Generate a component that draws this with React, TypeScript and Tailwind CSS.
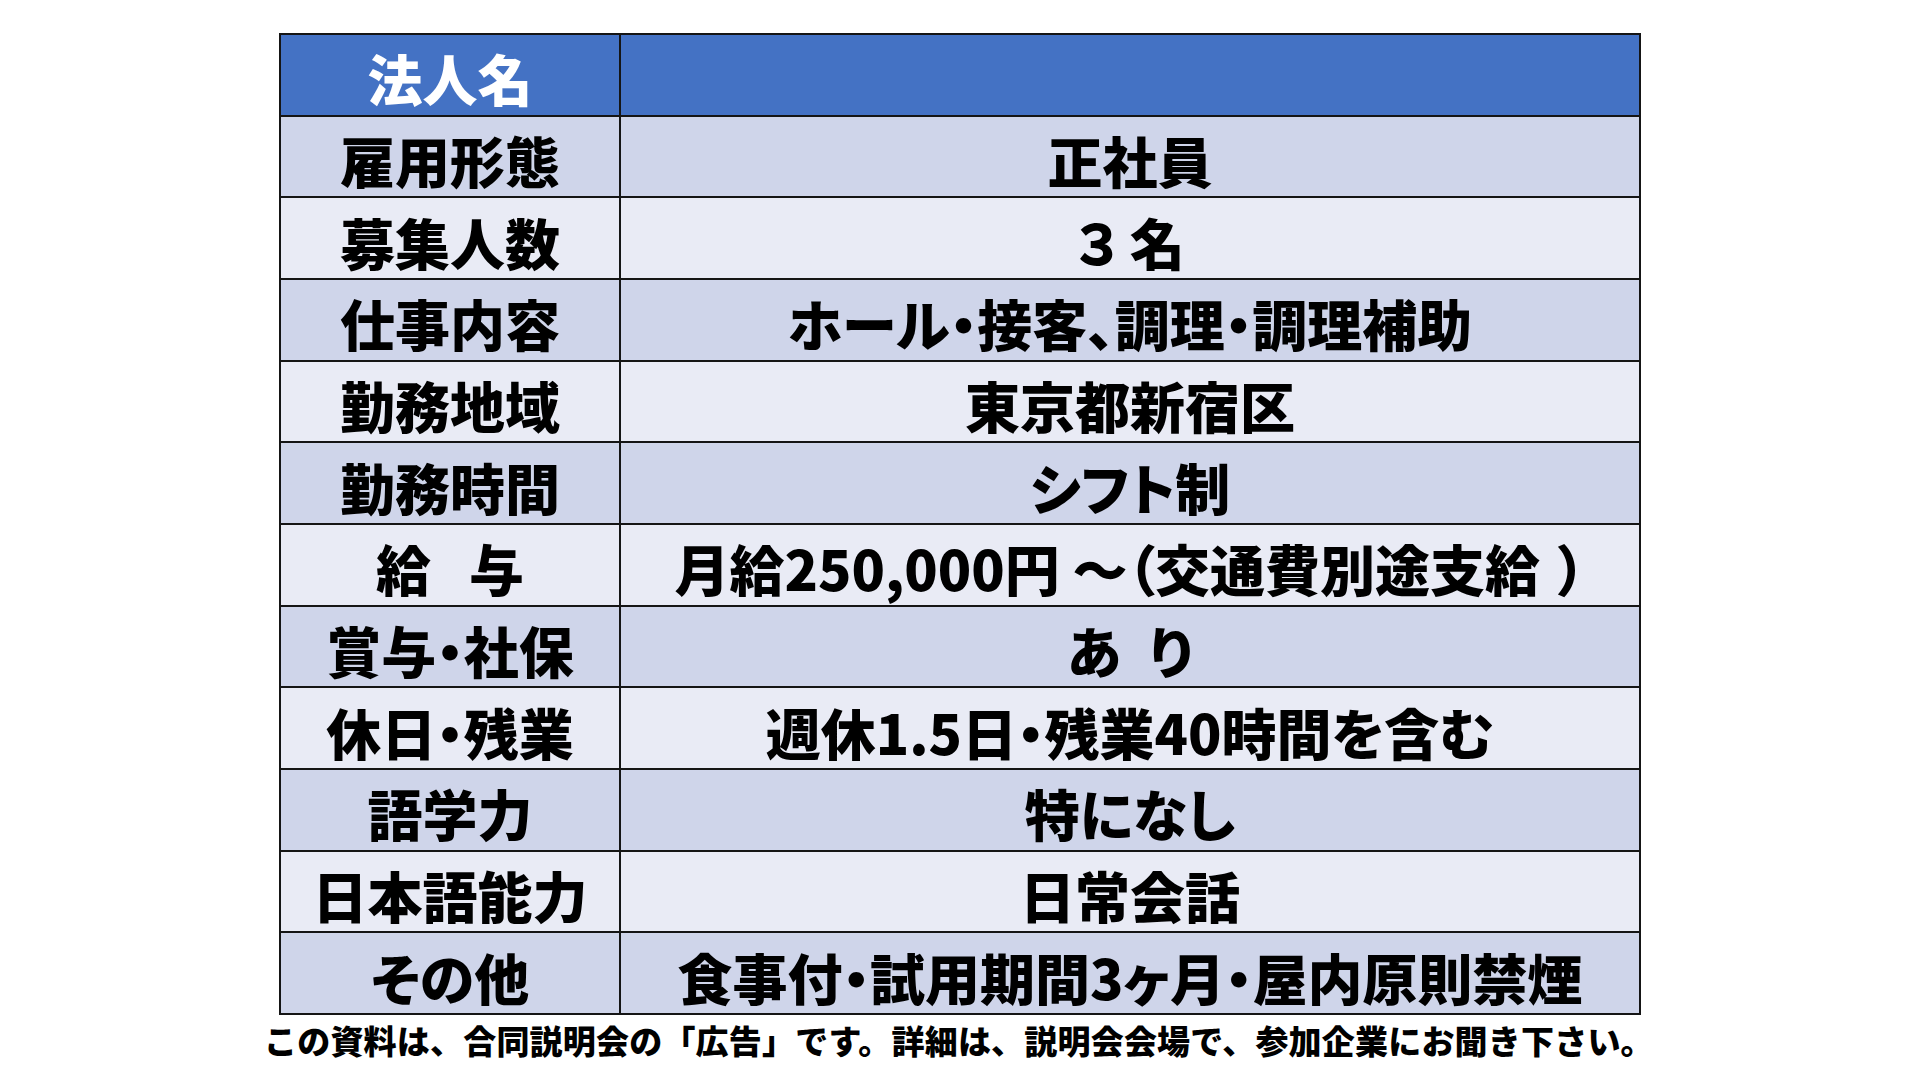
import React from "react";

const rows: { label: React.ReactNode; value: React.ReactNode }[] = [
  { label: "雇用形態", value: "正社員" },
  { label: "募集人数", value: "３ 名" },
  { label: "仕事内容", value: "ホール・接客、調理・調理補助" },
  { label: "勤務地域", value: "東京都新宿区" },
  { label: "勤務時間", value: "シフト制" },
  {
    label: (
      <>
        給<span className="inline-block w-[38px]"></span>与
      </>
    ),
    value: (
      <>
        月給250,000円 ～（交通費別途支給
        <span className="inline-block w-[18px]"></span>）
      </>
    ),
  },
  { label: "賞与・社保", value: (<>あ<span className="inline-block w-[28px]"></span>り</>) },
  { label: "休日・残業", value: "週休1.5日・残業40時間を含む" },
  { label: "語学力", value: "特になし" },
  { label: "日本語能力", value: "日常会話" },
  { label: "その他", value: "食事付・試用期間3ヶ月・屋内原則禁煙" },
];

export default function App() {
  return (
    <div
      className="w-[1920px] h-[1080px] bg-white overflow-hidden"
      style={{ fontFamily: '"Noto Sans CJK JP", "Noto Sans", sans-serif' }}
    >
      <div className="pt-[33px] pl-[279px]">
        <div className="w-[1362px] h-[982px] bg-[#151515] p-[2px] grid grid-cols-[338px_1fr] grid-rows-12 gap-[2px] [font-feature-settings:'palt']">
          <div className="bg-[#4472C4] flex items-center justify-center pt-[5px] text-white text-[55px] font-black leading-none">
            法人名
          </div>
          <div className="bg-[#4472C4]"></div>
          {rows.map((r, i) => {
            const bg = i % 2 === 0 ? "bg-[#CFD5EA]" : "bg-[#E9EBF5]";
            return (
              <React.Fragment key={i}>
                <div className={`${bg} flex items-center justify-center pt-[6px] text-black text-[55px] font-black leading-none whitespace-nowrap`}>
                  {r.label}
                </div>
                <div className={`${bg} flex items-center justify-center pt-[6px] text-black text-[55px] font-black leading-none whitespace-nowrap`}>
                  {r.value}
                </div>
              </React.Fragment>
            );
          })}
        </div>
        <div className="ml-[-15px] mt-[5px] text-[33px] tracking-[0.2px] font-black leading-[40px] text-black whitespace-nowrap">
          この資料は、合同説明会の「広告」です。詳細は、説明会会場で、参加企業にお聞き下さい。
        </div>
      </div>
    </div>
  );
}
